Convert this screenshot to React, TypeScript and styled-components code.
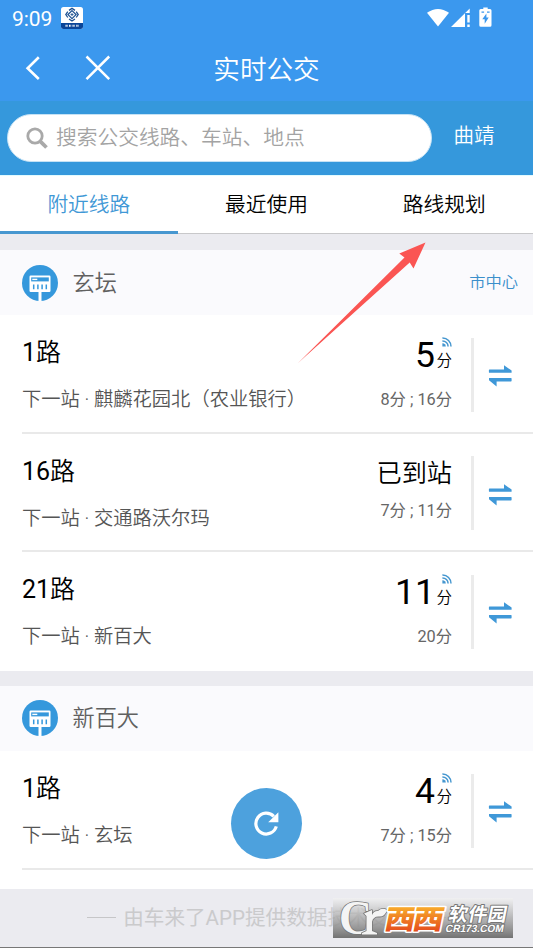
import React from 'react';
import styled, { createGlobalStyle } from 'styled-components';

const GlobalStyle = createGlobalStyle`
  * { box-sizing: border-box; }
  html, body { margin: 0; padding: 0; }
  body {
    width: 533px;
    height: 948px;
    overflow: hidden;
    background: #ebebf0;
    font-family: Roboto, "Noto Sans CJK SC", sans-serif;
    color: #000;
  }
`;

const Screen = styled.div`
  position: relative;
  width: 533px;
  height: 948px;
  overflow: hidden;
  display: flex;
  flex-direction: column;
  background: #ebebf0;
  border-bottom: 1px solid #777;
`;

const StatusBar = styled.div`
  height: 36px;
  flex: none;
  display: flex;
  align-items: center;
  padding: 0 40px 0 12px;
  background: #3b98ee;
  color: #fff;
`;

const Clock = styled.span`
  font-size: 21px;
  line-height: 36px;
  padding-top: 2px;
  letter-spacing: -0.1px;
  width: 49px;
`;

const StatusIcons = styled.div`
  margin-left: auto;
  display: flex;
  align-items: center;
`;

const TitleBar = styled.div`
  height: 65px;
  flex: none;
  display: grid;
  grid-template-columns: 200px 1fr 200px;
  align-items: center;
  background: #3b98ee;
  color: #fff;
`;

const NavIcons = styled.div`
  display: flex;
  align-items: center;
  padding-left: 25px;
  gap: 44px;
  margin-top: -1px;
  svg { display: block; }
`;

const Title = styled.h1`
  margin: 0;
  padding-top: 2px;
  font-weight: 350;
  font-size: 26.6px;
  line-height: 63px;
  text-align: center;
  white-space: nowrap;
`;

const SearchBar = styled.div`
  height: 74px;
  flex: none;
  display: flex;
  align-items: flex-start;
  padding: 13px 0 0 7px;
  background: #3598dc;
`;

const SearchBox = styled.div`
  width: 425px;
  height: 48px;
  border-radius: 24px;
  border: 1px solid #c5e2f5;
  background: #fff;
  display: flex;
  align-items: center;
  padding-left: 18px;
  gap: 8px;
  color: #a3a3a3;
  font-size: 20.73px;
  font-weight: 350;
  line-height: 46px;
  white-space: nowrap;
`;

const City = styled.div`
  margin-left: 21.5px;
  font-size: 20.5px;
  font-weight: 350;
  line-height: 44px;
  color: #fff;
`;

const Tabs = styled.div`
  height: 59px;
  flex: none;
  display: grid;
  grid-template-columns: repeat(3, 1fr);
  background: #fff;
  border-top: 1px solid #e2fbff;
`;

const Tab = styled.div<{ $active?: boolean }>`
  height: 58px;
  text-align: center;
  font-size: 20.73px;
  font-weight: 350;
  line-height: 58px;
  color: ${(p) => (p.$active ? '#3f98d6' : '#000')};
  box-shadow: ${(p) => (p.$active ? 'inset 0 -3px #4797d0' : 'inset 0 -1px #c8c8ca')};
`;

const Section = styled.section<{ $gap: number; $tail?: number }>`
  flex: none;
  margin-top: ${(p) => p.$gap}px;
  padding-bottom: ${(p) => p.$tail ?? 0}px;
  background: #fff;
`;

const StopHeader = styled.header`
  height: 65px;
  display: flex;
  align-items: center;
  padding: 0 15px 0 22px;
  background: #fafafd;
  svg { display: block; }
`;

const StopName = styled.span`
  margin-left: 14.5px;
  font-size: 22.2px;
  font-weight: 350;
  line-height: 64px;
  color: #606060;
`;

const Direction = styled.span`
  margin-left: auto;
  font-size: 16.3px;
  font-weight: 350;
  line-height: 64px;
  color: #3a8fcb;
`;

const RouteRow = styled.div<{ $last?: boolean }>`
  height: 118.6px;
  margin-left: 22px;
  display: flex;
  border-bottom: 2px solid ${(p) => (p.$last ? 'transparent' : '#e9e9e9')};
`;

const RouteInfo = styled.div`
  flex: 1;
  padding-top: 18px;
  min-width: 0;
  white-space: nowrap;
`;

const RouteName = styled.div`
  font-size: 25px;
  line-height: 40px;
`;

const Hanzi = styled.span`
  font-weight: 350;
`;

const NextStop = styled.div`
  margin-top: 8px;
  font-size: 19.3px;
  font-weight: 350;
  line-height: 38px;
  color: #555;
`;

const Arrival = styled.div`
  width: 120px;
  padding-top: 19px;
  display: flex;
  flex-direction: column;
  align-items: flex-end;
  white-space: nowrap;
`;

const Eta = styled.div`
  height: 40px;
  display: flex;
  align-items: flex-start;
  gap: 1px;
`;

const Minutes = styled.span`
  font-size: 35.5px;
  line-height: 42px;
`;

const Unit = styled.span`
  display: flex;
  flex-direction: column;
  align-items: flex-end;
  width: 16px;
  padding-top: 3px;
  font-size: 15.5px;
  font-weight: 350;
  line-height: 18px;
  svg { display: block; margin: 0 0 5px 0; }
`;

const Arrived = styled.span`
  font-size: 25.2px;
  font-weight: 350;
  line-height: 42px;
`;

const Later = styled.div<{ $arrived?: boolean }>`
  margin-top: ${(p) => (p.$arrived ? 6.6 : 14)}px;
  font-size: 16.3px;
  line-height: 24px;
  color: #666;
`;

const SwapCell = styled.div`
  width: 62px;
  height: 74px;
  margin: 22.8px 0 0 19px;
  padding: 3px 0 0 14px;
  display: flex;
  align-items: center;
  border-left: 3px solid #ebebeb;
`;

const Footer = styled.footer`
  height: 58px;
  flex: none;
  display: flex;
  align-items: center;
  justify-content: center;
  gap: 7px;
  font-size: 20.6px;
  line-height: 56px;
  color: #cacacc;
  white-space: nowrap;
`;

const Dash = styled.i`
  width: 29px;
  height: 1px;
  background: #c6c6c8;
`;

const RefreshButton = styled.button`
  position: absolute;
  left: 231px;
  top: 788px;
  width: 71px;
  height: 71px;
  padding: 0;
  border: 0;
  border-radius: 50%;
  background: #4da1dd;
  svg { display: block; }
`;

const Pointer = styled.svg`
  position: absolute;
  left: 295px;
  top: 239px;
`;

const Watermark = styled.svg`
  position: absolute;
  left: 333px;
  top: 898px;
`;

const StopIcon = () => (
  <svg width="36" height="36" viewBox="0 0 36 36">
    <circle cx="18" cy="18" r="18" fill="#3598dc" />
    <rect x="7.5" y="10.5" width="21" height="16.5" rx="1.2" fill="#fff" />
    <rect x="9.2" y="12.4" width="17.6" height="4" fill="#3598dc" />
    <rect x="10.3" y="13.7" width="5" height="1.4" fill="#fff" />
    <path d="M11.7 19.5v4.7M15.9 19.5v4.7M20.1 19.5v4.7M24.3 19.5v4.7" stroke="#3598dc" strokeWidth="1.5" />
    <path d="M18 26v10" stroke="#fff" strokeWidth="3" />
  </svg>
);

const SwapIcon = () => (
  <svg width="24" height="22" viewBox="0 0 24 22" fill="#3f98d8">
    <path d="M1.5 4.4H16V.2L23.6 5.6V7.8H1.5Q.9 7.8 .9 7.2V5Q.9 4.4 1.5 4.4z" />
    <path d="M23 13H1V15.2L8.6 21.4V16.4H23Q23.6 16.4 23.6 15.8V13.6Q23.6 13 23 13z" />
  </svg>
);

const SignalIcon = () => (
  <svg width="10" height="10" viewBox="0 0 10 10" fill="none" stroke="#4496cf" strokeWidth="1.5">
    <path d="M.4 1A8.4 8.4 0 0 1 9 9.6M.4 3.9A5.6 5.6 0 0 1 6.1 9.6" />
    <path d="M.4 6.2A3.2 3.2 0 0 1 3.8 9.6H.4z" fill="#4496cf" stroke="none" />
  </svg>
);

type Route = { number: string; next: string; minutes?: string; later: string };

const stops: { name: string; direction?: string; routes: Route[] }[] = [
  {
    name: '玄坛',
    direction: '市中心',
    routes: [
      { number: '1', next: '麒麟花园北（农业银行）', minutes: '5', later: '8分 ; 16分' },
      { number: '16', next: '交通路沃尔玛', later: '7分 ; 11分' },
      { number: '21', next: '新百大', minutes: '11', later: '20分' },
    ],
  },
  {
    name: '新百大',
    routes: [{ number: '1', next: '玄坛', minutes: '4', later: '7分 ; 15分' }],
  },
];

const RouteItem = ({ route, last }: { route: Route; last: boolean }) => (
  <RouteRow $last={last}>
    <RouteInfo>
      <RouteName>
        {route.number}
        <Hanzi>路</Hanzi>
      </RouteName>
      <NextStop>下一站 · {route.next}</NextStop>
    </RouteInfo>
    <Arrival>
      <Eta>
        {route.minutes ? (
          <>
            <Minutes>{route.minutes}</Minutes>
            <Unit>
              <SignalIcon />
              分
            </Unit>
          </>
        ) : (
          <Arrived>已到站</Arrived>
        )}
      </Eta>
      <Later $arrived={!route.minutes}>{route.later}</Later>
    </Arrival>
    <SwapCell>
      <SwapIcon />
    </SwapCell>
  </RouteRow>
);

export default function App() {
  return (
    <>
      <GlobalStyle />
      <Screen>
        <StatusBar>
          <Clock>9:09</Clock>
          <svg width="22" height="22" viewBox="0 0 22 22">
            <rect width="22" height="22" rx="2.5" fill="#fff" />
            <path d="M0 16h22v3.5a2.5 2.5 0 0 1-2.5 2.5h-17A2.5 2.5 0 0 1 0 19.5z" fill="#0a4598" />
            <g fill="none" stroke="#1e5292">
              <path d="M11 3.6 15 7.6 11 11.6 7 7.6z" strokeWidth="1.3" />
              <path d="M8 3.4 11 1.4 14 3.4M15.2 4.7 17.2 7.6 15.2 10.5M14 12 11 14 8 12M6.8 10.5 4.8 7.6 6.8 4.7" strokeWidth="1.3" />
              <path d="M9.5 7.6h3M11 6.1v3" strokeWidth=".9" />
            </g>
            <path d="M4.5 18.8h2.2M8 18.8h2.2M11.5 18.8h2.2M15.3 18.8h2.2" stroke="#fff" strokeWidth="2" strokeDasharray="1.2 .4" />
          </svg>
          <StatusIcons>
            <svg width="70" height="22" viewBox="0 0 70 22" fill="#fff">
              <path d="M4 5.8Q15 -1.8 26 5.8L15 19.5z" />
              <path d="M28 20 46.7 1.5V6H42V20zM44.3 8h2.4v7.6h-2.4zM44.3 17.5h2.4V20h-2.4z" />
              <path fillRule="evenodd" d="M60.3 .5h4.4V2H67a1.5 1.5 0 0 1 1.5 1.5v14.7a1.5 1.5 0 0 1-1.5 1.5h-9.2a1.5 1.5 0 0 1-1.5-1.5V3.5A1.5 1.5 0 0 1 57.8 2h2.5zM63.4 6.5 59.3 12.3h2.4v4.5l4-6.2h-2.3z" />
              <path d="M58.5 5.2h2.6M64 5.2h2.6" stroke="#3b98ee" strokeWidth="1.2" />
            </svg>
          </StatusIcons>
        </StatusBar>
        <TitleBar>
          <NavIcons>
            <svg width="16" height="24" viewBox="0 0 16 24" fill="none" stroke="#fff" strokeWidth="2.6">
              <path d="M13.8 1.2 2.6 12.2 13.8 23" />
            </svg>
            <svg width="26" height="26" viewBox="0 0 26 26" fill="none" stroke="#fff" strokeWidth="2.5">
              <path d="M1.5 1.5 24.2 24.2M24.2 1.5 1.5 24.2" />
            </svg>
          </NavIcons>
          <Title>实时公交</Title>
        </TitleBar>
        <SearchBar>
          <SearchBox>
            <svg width="22" height="22" viewBox="0 0 22 22" fill="none" stroke="#a9a9a9">
              <circle cx="9" cy="9" r="7.2" strokeWidth="2.8" />
              <path d="M14.3 14.3 20.5 20.5" strokeWidth="3.8" />
            </svg>
            <span>搜索公交线路、车站、地点</span>
          </SearchBox>
          <City>曲靖</City>
        </SearchBar>
        <Tabs>
          <Tab $active>附近线路</Tab>
          <Tab>最近使用</Tab>
          <Tab>路线规划</Tab>
        </Tabs>
        {stops.map((stop, i) => (
          <Section key={stop.name} $gap={i === 0 ? 16 : 15.2} $tail={i === 0 ? 0 : 19.4}>
            <StopHeader>
              <StopIcon />
              <StopName>{stop.name}</StopName>
              {stop.direction && <Direction>{stop.direction}</Direction>}
            </StopHeader>
            {stop.routes.map((r, j) => (
              <RouteItem key={r.number} route={r} last={i === 0 && j === stop.routes.length - 1} />
            ))}
          </Section>
        ))}
        <Footer>
          <Dash />
          <span>由车来了APP提供数据技术支持</span>
          <Dash />
        </Footer>

        <RefreshButton aria-label="刷新">
          <svg width="71" height="71" viewBox="0 0 71 71">
            <path d="M45.3 38.4A10.4 10.4 0 1 1 42.8 28.4" fill="none" stroke="#fff" strokeWidth="3.2" />
            <path d="M47.4 24.2V34.2H37.2z" fill="#fff" />
          </svg>
        </RefreshButton>

        <Pointer width="135" height="128" viewBox="0 0 135 128">
          <path d="M2.8 124.2 109.5 18.5 104.3 14.5 130.5 3.5 118.5 29.5 114.7 23.5z" fill="#fa5553" />
        </Pointer>

        <Watermark width="180" height="40" viewBox="0 0 180 40">
          <defs>
            <linearGradient id="plate" x1="0" y1="0" x2="0" y2="1">
              <stop offset="0" stopColor="#f2f2f2" stopOpacity=".7" />
              <stop offset=".5" stopColor="#a4a4a4" stopOpacity=".75" />
              <stop offset="1" stopColor="#727272" />
            </linearGradient>
            <linearGradient id="orange" x1="0" y1="0" x2="0" y2="1">
              <stop offset=".15" stopColor="#fbb92c" />
              <stop offset=".9" stopColor="#e4481c" />
            </linearGradient>
          </defs>
          <rect width="180" height="40" fill="url(#plate)" />
          <g fill="#f4f4f4" stroke="#777" strokeWidth="1.6" paintOrder="stroke" strokeLinejoin="round">
            <text x="6" y="36" fontFamily="Liberation Serif, serif" fontWeight="700" fontSize="49" textLength="33" lengthAdjust="spacingAndGlyphs">C</text>
            <path d="M31 15.5 39 12V17Q41 12.5 45 13Q49 9 54 12Q51.5 19.5 45.5 18.5Q40 18.5 39 24V33L44 35V36.5H29V35L33.5 33V18z" />
          </g>
          <g fontFamily="Noto Sans CJK SC, sans-serif" fontWeight="900">
            <g
              transform="matrix(1.14 0 -.2 1 0 0)"
              fill="url(#orange)"
              stroke="#fff"
              strokeWidth="3"
              paintOrder="stroke"
              strokeLinejoin="round"
            >
              <text x="49.5" y="31" fontSize="27">西</text>
              <text x="74" y="31" fontSize="27">西</text>
            </g>
            <g
              transform="matrix(1 0 -.2 1 0 0)"
              fill="#fff"
              stroke="#777"
              strokeWidth="2"
              paintOrder="stroke"
              strokeLinejoin="round"
            >
              <text x="119.5" y="23.5" fontSize="19" fontWeight="700" textLength="58">软件园</text>
              <text x="119" y="34.5" fontFamily="Liberation Sans, sans-serif" fontWeight="700" fontSize="10.5" textLength="58" lengthAdjust="spacingAndGlyphs">CR173.COM</text>
            </g>
          </g>
        </Watermark>
      </Screen>
    </>
  );
}
